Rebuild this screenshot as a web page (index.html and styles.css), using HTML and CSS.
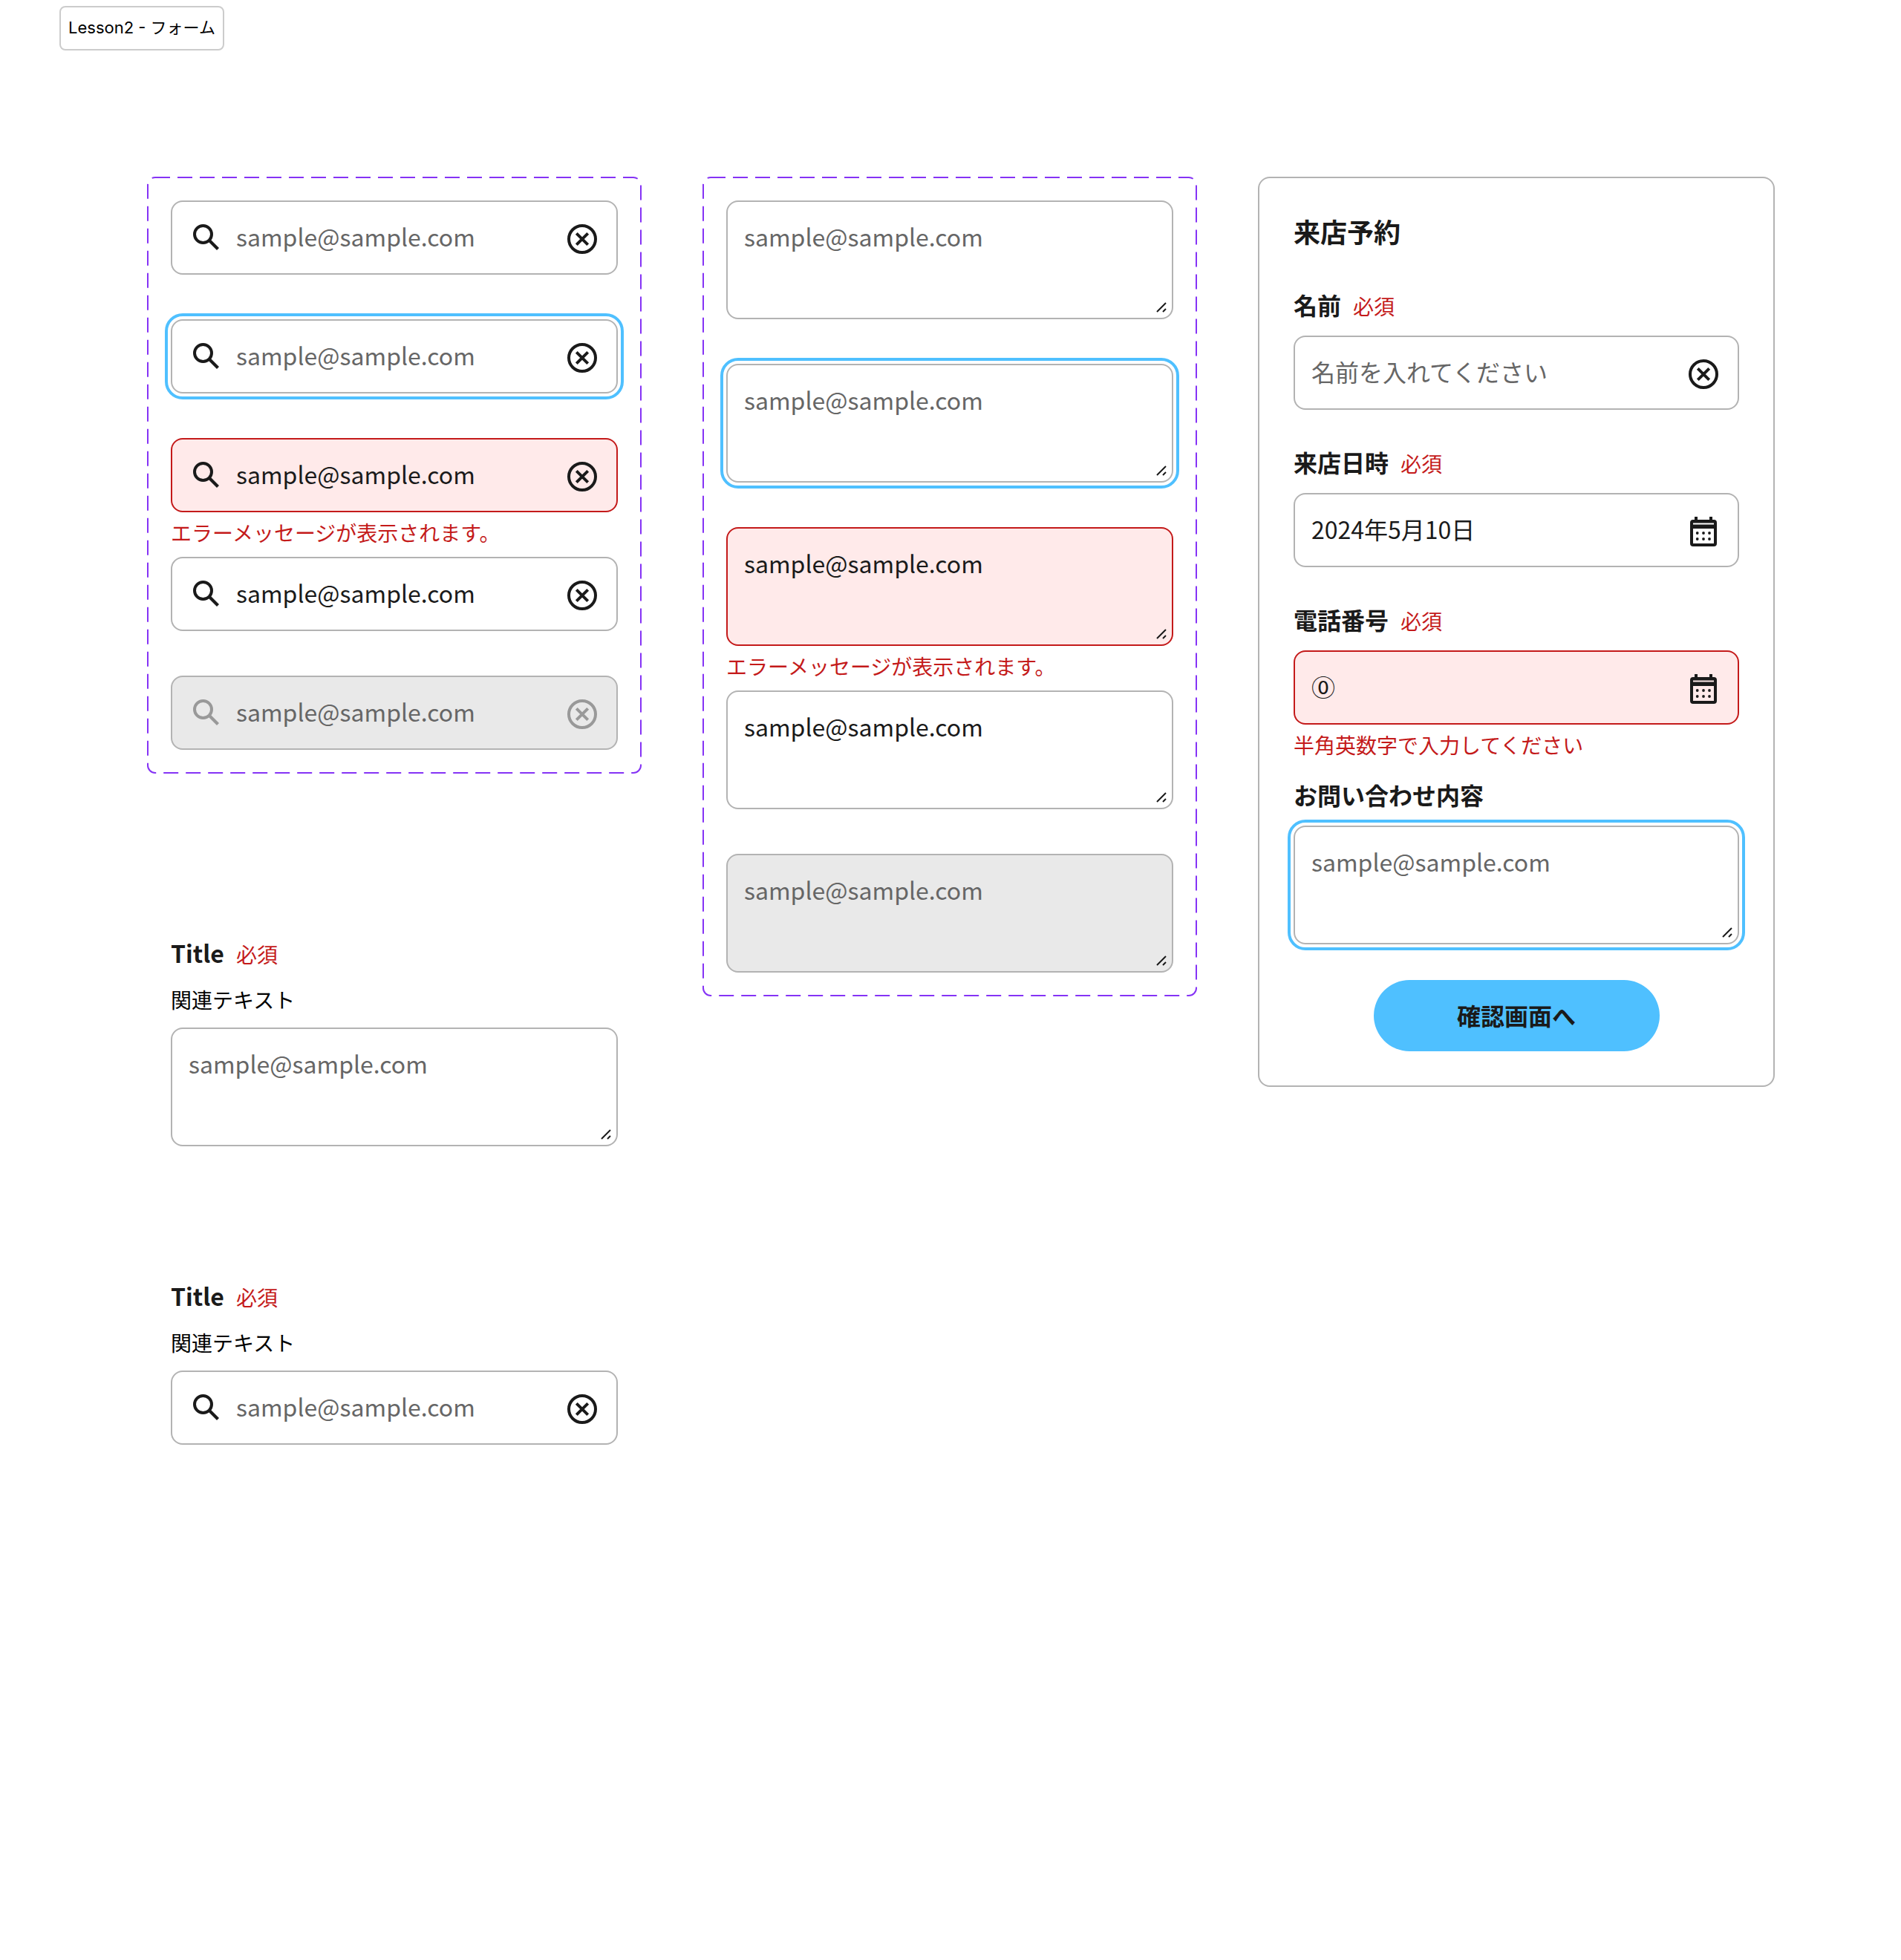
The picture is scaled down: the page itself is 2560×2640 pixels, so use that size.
FILE: index.html
```html
<!DOCTYPE html>
<html lang="ja">
<head>
    <meta charset="UTF-8">
    <title>Lesson2 - フォーム</title>
    <link rel="stylesheet" href="styles.css">
</head>

<body>
    <svg class="sprite" aria-hidden="true">
        <symbol id="icon-search" viewBox="0 0 48 48">
            <circle cx="19.500" cy="19.500" r="11.500" fill="none" stroke="currentColor" stroke-width="4"/>
            <path d="M27.500 27.500L39.500 39.500" fill="none" stroke="currentColor" stroke-width="4.200"/>
        </symbol>
        <symbol id="icon-clear" viewBox="0 0 48 48">
            <circle cx="24" cy="24" r="18" fill="none" stroke="currentColor" stroke-width="4"/>
            <path d="M16.300 16.300L31.700 31.700M31.700 16.300L16.300 31.700" fill="none" stroke="currentColor" stroke-width="4"/>
        </symbol>
        <symbol id="icon-calendar" viewBox="0 0 48 48">
            <path fill="currentColor" fill-rule="evenodd" d="M12 4h4v4h16V4h4v4h2a4 4 0 0 1 4 4v28a4 4 0 0 1-4 4H10a4 4 0 0 1-4-4V12a4 4 0 0 1 4-4h2zM10 12.500v2h28v-2zM10 20v20h28V20z"/>
            <circle cx="15.700" cy="26" r="1.900" fill="currentColor"/>
            <circle cx="24" cy="26" r="1.900" fill="currentColor"/>
            <circle cx="32" cy="26" r="1.900" fill="currentColor"/>
            <circle cx="15.700" cy="34" r="1.900" fill="currentColor"/>
            <circle cx="24" cy="34" r="1.900" fill="currentColor"/>
            <circle cx="32" cy="34" r="1.900" fill="currentColor"/>
        </symbol>
        <symbol id="icon-grip" viewBox="0 0 14 14">
            <path d="M1 13L13 1M9 13l4-4" fill="none" stroke="currentColor" stroke-width="2"/>
        </symbol>
    </svg>

    <div class="page-tag">Lesson2 - フォーム</div>

    <div class="columns">
        <!-- 左: テキスト入力 -->
        <div class="col">
            <div class="variant-box">
                <svg class="dash-frame" aria-hidden="true"><rect x="1" y="1" rx="10"/></svg>

                <div class="input">
                    <svg class="icon"><use href="#icon-search"/></svg>
                    <span class="placeholder">sample@sample.com</span>
                    <svg class="icon icon-end"><use href="#icon-clear"/></svg>
                </div>
                <div class="input is-focus">
                    <svg class="icon"><use href="#icon-search"/></svg>
                    <span class="placeholder">sample@sample.com</span>
                    <svg class="icon icon-end"><use href="#icon-clear"/></svg>
                </div>
                <div class="input is-error has-message">
                    <svg class="icon"><use href="#icon-search"/></svg>
                    <span>sample@sample.com</span>
                    <svg class="icon icon-end"><use href="#icon-clear"/></svg>
                </div>
                <p class="error-text">エラーメッセージが表示されます。</p>
                <div class="input">
                    <svg class="icon"><use href="#icon-search"/></svg>
                    <span>sample@sample.com</span>
                    <svg class="icon icon-end"><use href="#icon-clear"/></svg>
                </div>
                <div class="input is-disabled">
                    <svg class="icon"><use href="#icon-search"/></svg>
                    <span class="placeholder">sample@sample.com</span>
                    <svg class="icon icon-end"><use href="#icon-clear"/></svg>
                </div>
            </div>

            <div class="sample-group first">
                <div class="label-row">
                    <span class="label">Title</span>
                    <span class="required">必須</span>
                </div>
                <p class="related">関連テキスト</p>
                <div class="textarea">
                    <span class="placeholder">sample@sample.com</span>
                    <svg class="grip"><use href="#icon-grip"/></svg>
                </div>
            </div>

            <div class="sample-group second">
                <div class="label-row">
                    <span class="label">Title</span>
                    <span class="required">必須</span>
                </div>
                <p class="related">関連テキスト</p>
                <div class="input">
                    <svg class="icon"><use href="#icon-search"/></svg>
                    <span class="placeholder">sample@sample.com</span>
                    <svg class="icon icon-end"><use href="#icon-clear"/></svg>
                </div>
            </div>
        </div>

        <!-- 中: テキストエリア -->
        <div class="col">
            <div class="variant-box">
                <svg class="dash-frame" aria-hidden="true"><rect x="1" y="1" rx="10"/></svg>

                <div class="textarea">
                    <span class="placeholder">sample@sample.com</span>
                    <svg class="grip"><use href="#icon-grip"/></svg>
                </div>
                <div class="textarea is-focus">
                    <span class="placeholder">sample@sample.com</span>
                    <svg class="grip"><use href="#icon-grip"/></svg>
                </div>
                <div class="textarea is-error has-message">
                    <span>sample@sample.com</span>
                    <svg class="grip"><use href="#icon-grip"/></svg>
                </div>
                <p class="error-text">エラーメッセージが表示されます。</p>
                <div class="textarea">
                    <span>sample@sample.com</span>
                    <svg class="grip"><use href="#icon-grip"/></svg>
                </div>
                <div class="textarea is-disabled">
                    <span class="placeholder">sample@sample.com</span>
                    <svg class="grip"><use href="#icon-grip"/></svg>
                </div>
            </div>
        </div>

        <!-- 右: 来店予約フォーム -->
        <div class="col col-form">
            <form class="reserve-card">
                <h2 class="card-title">来店予約</h2>

                <div class="form-item">
                    <div class="label-row">
                        <span class="label">名前</span>
                        <span class="required">必須</span>
                    </div>
                    <div class="input is-plain">
                        <span class="placeholder">名前を入れてください</span>
                        <svg class="icon icon-end"><use href="#icon-clear"/></svg>
                    </div>
                </div>

                <div class="form-item">
                    <div class="label-row">
                        <span class="label">来店日時</span>
                        <span class="required">必須</span>
                    </div>
                    <div class="input is-plain">
                        <span>2024年5月10日</span>
                        <svg class="icon icon-end"><use href="#icon-calendar"/></svg>
                    </div>
                </div>

                <div class="form-item">
                    <div class="label-row">
                        <span class="label">電話番号</span>
                        <span class="required">必須</span>
                    </div>
                    <div class="input is-plain is-error has-message">
                        <span>⓪</span>
                        <svg class="icon icon-end"><use href="#icon-calendar"/></svg>
                    </div>
                    <p class="error-text">半角英数字で入力してください</p>
                </div>

                <div class="form-item item-after-error">
                    <div class="label-row">
                        <span class="label">お問い合わせ内容</span>
                    </div>
                    <div class="textarea is-focus">
                        <span class="placeholder">sample@sample.com</span>
                        <svg class="grip"><use href="#icon-grip"/></svg>
                    </div>
                </div>

                <button class="submit-btn" type="button">確認画面へ</button>
            </form>
        </div>
    </div>
</body>
</html>
```

FILE: styles.css
```css
* {
    box-sizing: border-box;
}

body {
    margin: 0;
    min-height: 2640px;
    background-color: #fff;
    color: #1a1a1a;
    font-family: "Noto Sans CJK JP", "Noto Sans", sans-serif;
    font-size: 32px;
}

p {
    margin: 0;
}

.sprite {
    display: none;
}

.page-tag {
    width: 222px;
    height: 60px;
    margin: 8px 0 0 80px;
    border: 2px solid #ccc;
    border-radius: 8px;
    color: #000;
    font-family: Inter, "Noto Sans CJK JP", sans-serif;
    font-size: 22px;
    line-height: 55px;
    text-align: center;
    white-space: nowrap;
}

.columns {
    display: flex;
    align-items: flex-start;
    gap: 82px;
    margin-top: 170px;
    padding-left: 198px;
}

.col {
    width: 666px;
}

.col-form {
    width: 696px;
}

/* variants frame */
.variant-box {
    position: relative;
    display: flex;
    flex-direction: column;
    gap: 60px;
    padding: 32px;
}

.dash-frame {
    position: absolute;
    top: 0;
    left: 0;
    width: 100%;
    height: 100%;
    pointer-events: none;
}

.dash-frame rect {
    width: calc(100% - 2px);
    height: calc(100% - 2px);
    fill: none;
    stroke: #8533f5;
    stroke-width: 2;
    stroke-dasharray: 20 10;
}

/* inputs */
.input,
.textarea {
    position: relative;
    border: 2px solid #b3b3b3;
    border-radius: 16px;
    background-color: #fff;
    line-height: 54px;
}

.input {
    display: flex;
    align-items: center;
    gap: 16px;
    height: 100px;
    padding: 0 22px;
}

.input > span {
    margin-bottom: 4px;
}

.textarea {
    height: 160px;
    padding: 19px 22px;
}

.placeholder {
    color: #666;
}

.is-focus {
    outline: 4px solid #4fc0ff;
    outline-offset: 4px;
}

.is-error {
    border-color: #c41a1a;
    background-color: #ffeaea;
}

.is-disabled {
    background-color: #e9e9e9;
}

.has-message {
    margin-bottom: -54px;
}

.icon {
    flex: none;
    width: 48px;
    height: 48px;
    color: #1a1a1a;
}

.icon-end {
    margin-top: 4px;
    margin-left: auto;
}

.is-disabled .icon {
    color: #999;
}

.grip {
    position: absolute;
    right: 7px;
    bottom: 7px;
    width: 14px;
    height: 14px;
    color: #1a1a1a;
}

.error-text {
    margin-bottom: -48px;
    color: #c41a1a;
    font-size: 28px;
    line-height: 42px;
}

/* label */
.label-row {
    display: flex;
    align-items: baseline;
    gap: 16px;
    height: 48px;
    line-height: 48px;
}

.label {
    font-weight: 700;
}

.required {
    color: #c41a1a;
    font-size: 28px;
}

.related {
    margin: 18px 0 17px;
    color: #000;
    font-size: 28px;
    line-height: 42px;
}

.sample-group {
    margin: 0 32px;
}

.sample-group.first {
    margin-top: 217px;
}

.sample-group.second {
    margin-top: 177px;
}

/* reservation form */
.reserve-card {
    display: flex;
    flex-direction: column;
    padding: 44px 46px 46px;
    border: 2px solid #b3b3b3;
    border-radius: 16px;
}

.card-title {
    margin: 0 0 2px;
    font-size: 36px;
    font-weight: 700;
    line-height: 54px;
}

.form-item {
    margin-top: 46px;
}

.form-item .label-row {
    margin-bottom: 18px;
}

.form-item .has-message {
    margin-bottom: 6px;
}

.form-item .error-text {
    margin-bottom: 0;
}

.item-after-error {
    margin-top: 22px;
}

.submit-btn {
    align-self: center;
    width: 385px;
    height: 96px;
    margin-top: 48px;
    padding: 0 0 2px;
    border: none;
    border-radius: 48px;
    background-color: #4fc0ff;
    color: #1a1a1a;
    font-family: inherit;
    font-size: 32px;
    font-weight: 700;
}
```
